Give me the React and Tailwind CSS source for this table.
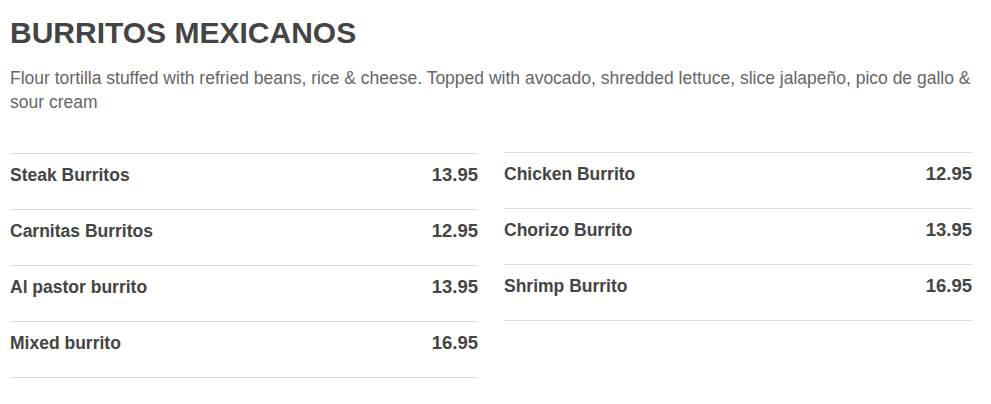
const left = [
  ['Steak Burritos', '13.95'],
  ['Carnitas Burritos', '12.95'],
  ['Al pastor burrito', '13.95'],
  ['Mixed burrito', '16.95'],
];

const right = [
  ['Chicken Burrito', '12.95'],
  ['Chorizo Burrito', '13.95'],
  ['Shrimp Burrito', '16.95'],
];

function MenuColumn({ items, className = '' }) {
  return (
    <ul className={`border-b border-[#dddddd] ${className}`}>
      {items.map(([name, price]) => (
        <li
          key={name}
          className="flex h-[56px] items-start justify-between border-t border-[#dddddd] pt-[9px]"
        >
          <span className="text-[17.5px] font-bold leading-6 text-[#444444]">{name}</span>
          <span className="text-[18.5px] font-bold leading-6 text-[#444444]">{price}</span>
        </li>
      ))}
    </ul>
  );
}

export default function App() {
  return (
    <div
      className="min-h-[404px] bg-white px-[10px] pt-[16px]"
      style={{ fontFamily: '"Liberation Sans", Arial, sans-serif' }}
    >
      <div className="w-[962px]">
        <h1 className="text-[30px] font-bold leading-[1.15] text-[#444444]">BURRITOS MEXICANOS</h1>
        <p className="mt-[15px] text-[17.5px] leading-6 text-[#666666]">
          Flour tortilla stuffed with refried beans, rice &amp; cheese. Topped with avocado, shredded
          lettuce, slice jalapeño, pico de gallo &amp; sour cream
        </p>
        <div className="mt-[39px] grid grid-cols-2 items-start gap-x-[26px]">
          <MenuColumn items={left} />
          <MenuColumn items={right} className="-mt-px" />
        </div>
      </div>
    </div>
  );
}
